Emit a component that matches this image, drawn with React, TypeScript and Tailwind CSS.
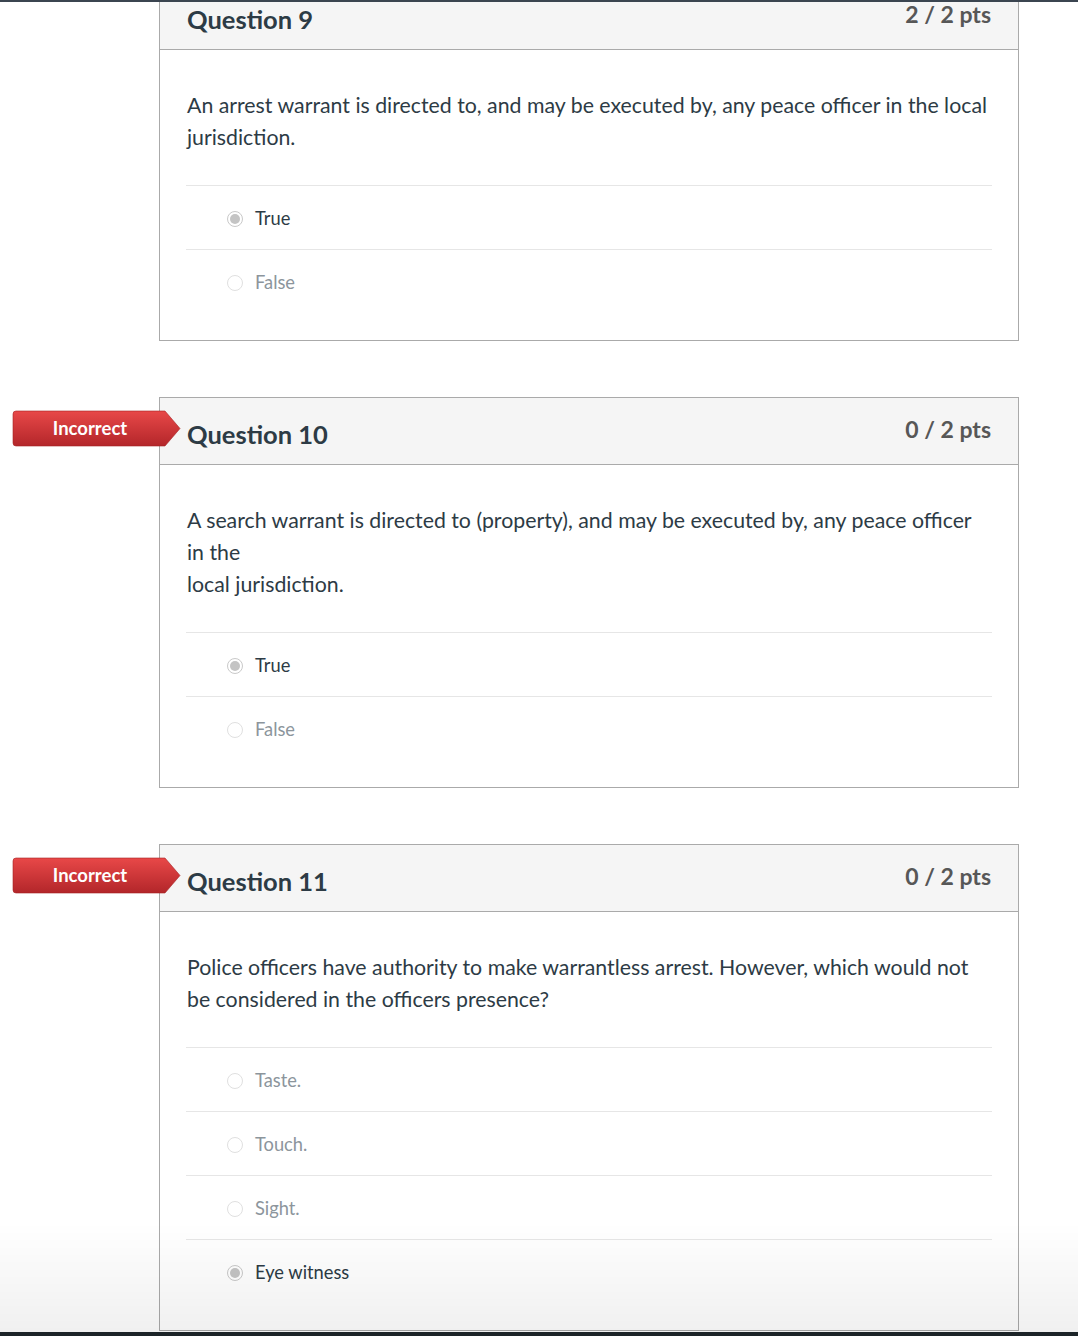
import React from "react";

type Answer = { text: string; selected?: boolean };
type Q = {
  num: number;
  pts: string;
  incorrect?: boolean;
  lines: string[];
  answers: Answer[];
  first?: boolean;
};

const questions: Q[] = [
  {
    num: 9,
    pts: "2 / 2 pts",
    first: true,
    lines: [
      "An arrest warrant is directed to, and may be executed by, any peace officer in the local",
      "jurisdiction.",
    ],
    answers: [{ text: "True", selected: true }, { text: "False" }],
  },
  {
    num: 10,
    pts: "0 / 2 pts",
    incorrect: true,
    lines: [
      "A search warrant is directed to (property), and may be executed by, any peace officer",
      "in the",
      "local jurisdiction.",
    ],
    answers: [{ text: "True", selected: true }, { text: "False" }],
  },
  {
    num: 11,
    pts: "0 / 2 pts",
    incorrect: true,
    lines: [
      "Police officers have authority to make warrantless arrest. However, which would not",
      "be considered in the officers presence?",
    ],
    answers: [
      { text: "Taste." },
      { text: "Touch." },
      { text: "Sight." },
      { text: "Eye witness", selected: true },
    ],
  },
];

function Badge() {
  return (
    <div className="absolute left-[-148px] top-[12px] w-[170px] h-[37px]">
      <svg width="170" height="37" viewBox="0 0 170 37" className="absolute inset-0">
        <defs>
          <linearGradient id="bg" x1="0" y1="0" x2="0" y2="1">
            <stop offset="0" stopColor="#e84848" />
            <stop offset="1" stopColor="#b3262a" />
          </linearGradient>
        </defs>
        <path d="M4 1 H153 L168 18.5 L153 36 H4 Q1 36 1 33 V4 Q1 1 4 1 Z" fill="url(#bg)" stroke="#a62124" strokeWidth="0.6" />
      </svg>
      <div className="relative flex h-full w-[156px] items-center justify-center text-[18.5px] font-bold text-white leading-none">
        Incorrect
      </div>
    </div>
  );
}

function Radio({ selected }: { selected?: boolean }) {
  return selected ? (
    <div className="w-[16px] h-[16px] rounded-full border border-[#c9c9c9] bg-white flex items-center justify-center">
      <div className="w-[10px] h-[10px] rounded-full bg-[#c4c4c4]" />
    </div>
  ) : (
    <div className="w-[16px] h-[16px] rounded-full border border-[#e0e0e0] bg-white" />
  );
}

function Card({ q }: { q: Q }) {
  return (
    <div className={`relative w-[860px] border border-[#aaaaaa] bg-white ${q.first ? "mt-[-18px]" : "mt-[56px]"}`}>
      {q.incorrect && <Badge />}
      <div className="flex justify-between h-[67px] bg-[#f5f5f5] border-b border-[#aaaaaa] px-[27px]">
        <div className="pt-[23px] text-[25.5px] leading-[26px] font-bold text-[#2d3b45]">Question {q.num}</div>
        <div className="pt-[20px] text-[23px] leading-[23px] font-bold text-[#575757]">{q.pts}</div>
      </div>
      <div className="px-[26px] pt-[39px] pb-[27px]">
        <div className="text-[21.3px] leading-[32px] text-[#2d3b45] pl-[1px] whitespace-nowrap">
          {q.lines.map((l, i) => (
            <div key={i}>{l}</div>
          ))}
        </div>
        <div className="mt-[32px]">
          {q.answers.map((a, i) => (
            <div key={i} className="flex items-center h-[64px] border-t border-[#e6e6e6] pl-[41px] pt-[3px]">
              <Radio selected={a.selected} />
              <span className={`ml-[12px] text-[18.3px] ${a.selected ? "text-[#2d3b45]" : "text-[#8c959c]"}`}>{a.text}</span>
            </div>
          ))}
        </div>
      </div>
    </div>
  );
}

export default function App() {
  return (
    <div className="relative min-h-[1336px] bg-white overflow-hidden" style={{ fontFamily: "Lato, 'Noto Sans', sans-serif" }}>
      <div className="absolute top-0 left-0 right-0 h-[2px] bg-[#3b4550] z-10" />
      <div className="pl-[159px] pb-[100px]">
        {questions.map((q) => (
          <Card key={q.num} q={q} />
        ))}
      </div>
      <div className="fixed left-0 right-0 bottom-[4px] h-[110px] bg-gradient-to-b from-[rgba(0,0,0,0)] to-[rgba(0,0,0,0.06)] pointer-events-none z-10" />
      <div className="fixed left-0 right-0 bottom-0 h-[4px] bg-[#1c2428] z-10" />
    </div>
  );
}
